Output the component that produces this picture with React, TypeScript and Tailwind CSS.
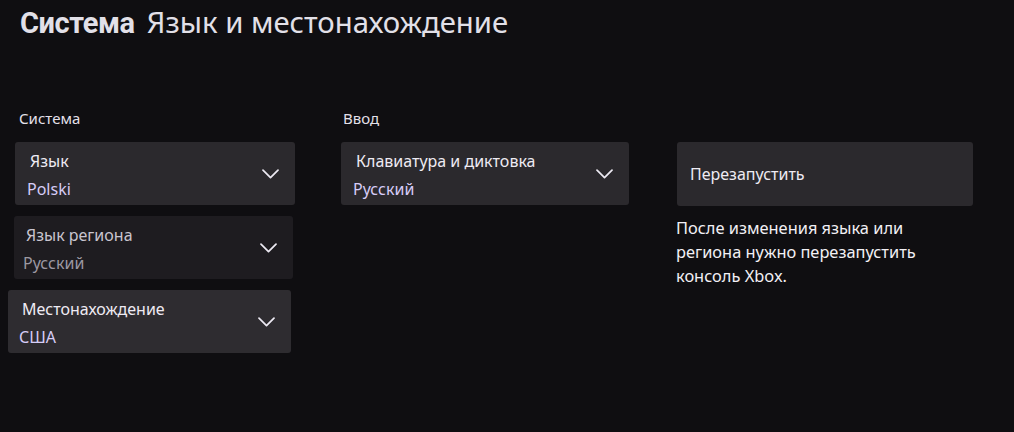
import React from 'react';

const Chevron = () => (
  <svg width="17" height="10" viewBox="0 0 17 10" fill="none" className="shrink-0">
    <path d="M1 1.2 L8.5 8.6 L16 1.2" stroke="#ece9f2" strokeWidth="1.7" strokeLinecap="round" strokeLinejoin="round" />
  </svg>
);

type Item = {
  label: string;
  value: string;
  disabled?: boolean;
  className: string;
};

const Dropdown = ({ label, value, disabled, className }: Item) => (
  <div
    className={`h-[63px] rounded-[3px] flex items-center justify-between pr-[16px] ${
      disabled ? 'bg-[#1e1c20]' : 'bg-[#2b292d]'
    } ${className}`}
  >
    <div className="flex flex-col pt-[2px] text-[16px] leading-[28px]">
      <span className={disabled ? 'text-[#c9c5cf] pl-[1px]' : 'text-[#eeebf3] pl-[1px]'}>{label}</span>
      <span className={disabled ? 'text-[#9c98a2] -ml-[2px]' : 'text-[#d6ccf7] -ml-[2px]'}>{value}</span>
    </div>
    <Chevron />
  </div>
);

const App = () => {
  return (
    <div
      className="w-[1014px] h-[432px] overflow-hidden bg-[#0f0e11] text-white"
      style={{ fontFamily: '"Noto Sans", "Open Sans", sans-serif' }}
    >
      <div className="h-[40px] pt-[4px] pl-[20px] flex items-baseline gap-[12px] leading-[36px]">
        <h1
          className="text-[29px] font-bold tracking-[-0.4px] text-[#e2e0e8]"
          style={{ fontFamily: 'Roboto, "Noto Sans", sans-serif' }}
        >
          Система
        </h1>
        <h2 className="text-[29.3px] text-[#e2e0e8]">Язык и местонахождение</h2>
      </div>

      <div className="mt-[66px] flex items-start">
        <div className="w-[296px] flex flex-col">
          <div className="pl-[19px] h-[24px] leading-[24px] text-[15px] text-[#e4e0ea]">Система</div>
          <div className="mt-[12px] flex flex-col gap-[11px]">
            <Dropdown label="Язык" value="Polski" className="ml-[15px] w-[280px] pl-[14px]" />
            <Dropdown label="Язык региона" value="Русский" disabled className="ml-[14px] w-[279px] pl-[11px]" />
            <Dropdown label="Местонахождение" value="США" className="ml-[8px] w-[283px] pl-[13px] bg-[#2e2c30]" />
          </div>
        </div>

        <div className="ml-[45px] w-[288px] flex flex-col">
          <div className="pl-[2px] h-[24px] leading-[24px] text-[15px] text-[#e4e0ea]">Ввод</div>
          <div className="mt-[12px]">
            <Dropdown label="Клавиатура и диктовка" value="Русский" className="w-[288px] pl-[14px]" />
          </div>
        </div>

        <div className="ml-[48px] mt-[36px] w-[296px] flex flex-col">
          <div className="h-[64px] rounded-[3px] bg-[#2b292d] flex items-center pl-[13px] text-[16px] text-[#eeebf3]">
            Перезапустить
          </div>
          <p className="mt-[10px] -ml-[1px] text-[16.4px] leading-[24px] text-[#f2f0f5]">
            После изменения языка или
            <br />
            региона нужно перезапустить
            <br />
            консоль Xbox.
          </p>
        </div>
      </div>
    </div>
  );
};

export default App;
